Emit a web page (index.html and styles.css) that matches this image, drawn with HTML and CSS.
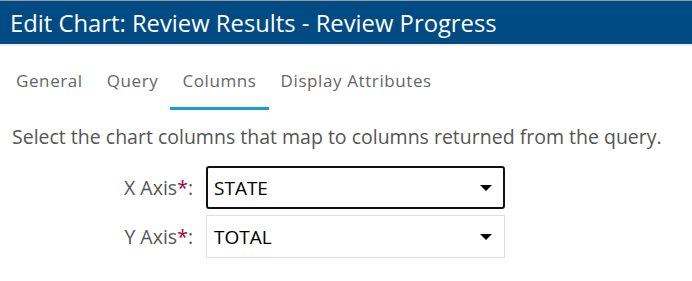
FILE: index.html
```html
<!DOCTYPE html>
<html>
<head>
  <title>Edit Chart</title>
  <link rel="stylesheet" href="styles.css">
</head>
<body>
  <div class="dialog">
    <header class="titlebar">
      <h1>Edit Chart: Review Results - Review Progress</h1>
    </header>

    <nav class="tabs">
      <a href="#">General</a>
      <a href="#">Query</a>
      <a href="#" class="active">Columns</a>
      <a href="#">Display Attributes</a>
    </nav>

    <p class="intro">Select the chart columns that map to columns returned from the query.</p>

    <div class="form">
      <div class="row">
        <label>X Axis<span class="req">*</span>:</label>
        <div class="select focused">
          <span>STATE</span>
          <span class="caret"></span>
        </div>
      </div>
      <div class="row">
        <label>Y Axis<span class="req">*</span>:</label>
        <div class="select">
          <span>TOTAL</span>
          <span class="caret"></span>
        </div>
      </div>
    </div>
  </div>
</body>
</html>
```

FILE: styles.css
```css
body {
  margin: 0;
  font-family: "Open Sans", Arial, sans-serif;
  background-color: #ffffff;
}

.dialog {
  border-top: 1px solid #9a9a9a;
}

.titlebar {
  background-color: #004b84;
  height: 43px;
  border-bottom: 2px solid #f0f0f0;
  display: flex;
  align-items: center;
  padding-left: 10px;
}

.titlebar h1 {
  margin: 0;
  color: #ffffff;
  font-size: 23.8px;
  font-weight: normal;
}

.tabs {
  display: flex;
  padding-left: 4px;
  margin-top: 20px;
}

.tabs a {
  color: #666666;
  text-decoration: none;
  font-size: 17px;
  letter-spacing: 0.6px;
  padding: 3px 12px 15px;
  border-bottom: 3px solid transparent;
}

.tabs a.active {
  border-bottom-color: #1a9ad6;
}

.intro {
  margin: 13px 0 0 12px;
  color: #555555;
  font-size: 19.5px;
}

.form {
  margin-top: 16px;
  display: flex;
  flex-direction: column;
  gap: 6px;
}

.row {
  display: flex;
  align-items: center;
}

.row label {
  width: 193px;
  text-align: right;
  color: #555555;
  font-size: 19.5px;
  margin-right: 13px;
}

.req {
  color: #a0003c;
}

.select {
  box-sizing: border-box;
  width: 299px;
  height: 43px;
  border: 1px solid #dddddd;
  display: flex;
  align-items: center;
  justify-content: space-between;
  padding: 0 12px 0 7px;
  font-size: 19px;
  color: #000000;
}

.select.focused {
  border: 2px solid #111111;
  border-radius: 3px;
  padding: 0 11px 0 6px;
}

.caret {
  width: 0;
  height: 0;
  border-left: 6px solid transparent;
  border-right: 6px solid transparent;
  border-top: 6px solid #000000;
}
```
